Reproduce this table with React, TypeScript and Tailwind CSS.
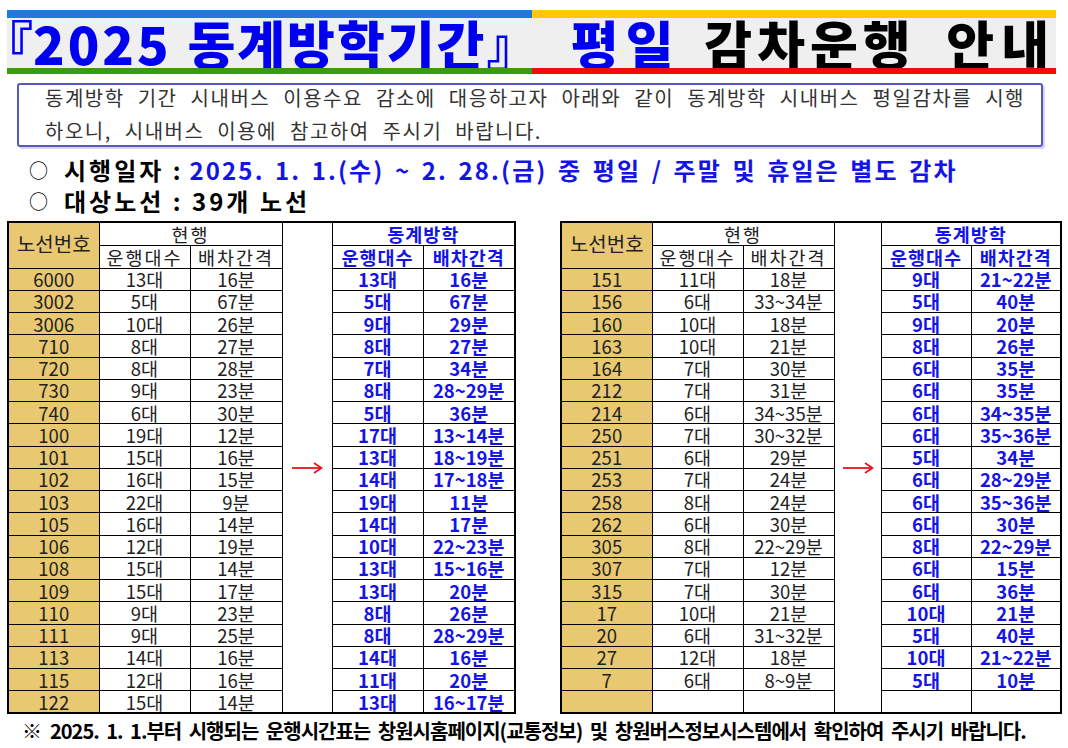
import React from "react";

const leftRows = [
  ["6000", "13대", "16분", "13대", "16분"],
  ["3002", "5대", "67분", "5대", "67분"],
  ["3006", "10대", "26분", "9대", "29분"],
  ["710", "8대", "27분", "8대", "27분"],
  ["720", "8대", "28분", "7대", "34분"],
  ["730", "9대", "23분", "8대", "28~29분"],
  ["740", "6대", "30분", "5대", "36분"],
  ["100", "19대", "12분", "17대", "13~14분"],
  ["101", "15대", "16분", "13대", "18~19분"],
  ["102", "16대", "15분", "14대", "17~18분"],
  ["103", "22대", "9분", "19대", "11분"],
  ["105", "16대", "14분", "14대", "17분"],
  ["106", "12대", "19분", "10대", "22~23분"],
  ["108", "15대", "14분", "13대", "15~16분"],
  ["109", "15대", "17분", "13대", "20분"],
  ["110", "9대", "23분", "8대", "26분"],
  ["111", "9대", "25분", "8대", "28~29분"],
  ["113", "14대", "16분", "14대", "16분"],
  ["115", "12대", "16분", "11대", "20분"],
  ["122", "15대", "14분", "13대", "16~17분"],
];

const rightRows = [
  ["151", "11대", "18분", "9대", "21~22분"],
  ["156", "6대", "33~34분", "5대", "40분"],
  ["160", "10대", "18분", "9대", "20분"],
  ["163", "10대", "21분", "8대", "26분"],
  ["164", "7대", "30분", "6대", "35분"],
  ["212", "7대", "31분", "6대", "35분"],
  ["214", "6대", "34~35분", "6대", "34~35분"],
  ["250", "7대", "30~32분", "6대", "35~36분"],
  ["251", "6대", "29분", "5대", "34분"],
  ["253", "7대", "24분", "6대", "28~29분"],
  ["258", "8대", "24분", "6대", "35~36분"],
  ["262", "6대", "30분", "6대", "30분"],
  ["305", "8대", "22~29분", "8대", "22~29분"],
  ["307", "7대", "12분", "6대", "15분"],
  ["315", "7대", "30분", "6대", "36분"],
  ["17", "10대", "21분", "10대", "21분"],
  ["20", "6대", "31~32분", "5대", "40분"],
  ["27", "12대", "18분", "10대", "21~22분"],
  ["7", "6대", "8~9분", "5대", "10분"],
  ["", "", "", "", ""],
];

function Arrow() {
  return (
    <svg width="32" height="14" viewBox="0 0 32 14" className="mx-auto">
      <line x1="1" y1="7" x2="30" y2="7" stroke="#e8141c" strokeWidth="1.8" />
      <path d="M23 2 L30.5 7 L23 12" fill="none" stroke="#e8141c" strokeWidth="1.8" />
    </svg>
  );
}

function RouteTable({ rows, cols }: { rows: string[][]; cols: string[] }) {
  const cell = "border border-black text-center p-0";
  const blue = "text-[#1414e6] font-bold";
  return (
    <table className="table-fixed border-collapse border-2 border-black leading-[20px] text-[18.5px] text-[#222]">
      <colgroup>
        {cols.map((c, i) => (
          <col key={i} className={c} />
        ))}
      </colgroup>
      <tbody>
        <tr className="h-[23px]">
          <td rowSpan={2} className={`${cell} bg-[#e8c870] text-[20px] pb-[3px]`}>
            노선번호
          </td>
          <td colSpan={2} className={`${cell} text-[18.5px] tracking-[2px]`}>
            현행
          </td>
          <td rowSpan={22} className={`${cell} align-middle`}>
            <Arrow />
          </td>
          <td colSpan={2} className={`${cell} ${blue} text-[18.5px] tracking-[1px]`}>
            동계방학
          </td>
        </tr>
        <tr className="h-[23px]">
          <td className={`${cell} text-[18.5px] tracking-[2px]`}>운행대수</td>
          <td className={`${cell} text-[18.5px] tracking-[2px]`}>배차간격</td>
          <td className={`${cell} ${blue} text-[18.5px] tracking-[1px]`}>운행대수</td>
          <td className={`${cell} ${blue} text-[18.5px] tracking-[1px]`}>배차간격</td>
        </tr>
        {rows.map((r, i) => (
          <tr key={i} className="h-[22.25px]">
            <td className={`${cell} bg-[#e8c870]`}>{r[0]}</td>
            <td className={cell}>{r[1]}</td>
            <td className={cell}>{r[2]}</td>
            <td className={`${cell} ${blue}`}>{r[3]}</td>
            <td className={`${cell} ${blue}`}>{r[4]}</td>
          </tr>
        ))}
      </tbody>
    </table>
  );
}

export default function App() {
  return (
    <div className="w-[1068px] h-[748px] bg-white overflow-hidden font-['Noto_Sans_CJK_KR',sans-serif]">
      {/* title band */}
      <div className="ml-[7px] mt-[10px] w-[1049px]">
        <div className="flex h-[8px]">
          <div className="w-[525px] bg-[#1c7ae2]" />
          <div className="flex-1 bg-[#ffc800]" />
        </div>
        <div className="flex items-center h-[50px] bg-[#efefef] text-[52px] font-black leading-[50px] whitespace-nowrap">
          <span className="w-[52px] -ml-[26px] text-[#0000f0]">『</span>
          <span className="w-[155px] text-[#0000f0] tracking-[3px]">2025</span>
          <span className="w-[385px] text-[#0000f0] tracking-[2px]">동계방학기간』</span>
          <span className="w-[134px] text-[#0000f0] tracking-[7px]">평일</span>
          <span className="w-[243px] text-black tracking-[5px]">감차운행</span>
          <span className="text-black tracking-[7px]">안내</span>
        </div>
        <div className="flex h-[6px]">
          <div className="w-[525px] bg-[#3a9a12]" />
          <div className="flex-1 bg-[#f20c0c]" />
        </div>
      </div>

      {/* notice */}
      <div className="ml-[17px] mt-[9px] w-[1026px] h-[64px] border-2 border-[#5656c4] rounded-[3px] shadow-[2px_2px_0_#d4d4f0] pl-[26px] pr-[16px] text-[20px] leading-[33px] text-[#333] tracking-[1.5px] [word-spacing:2px]">
        <div className="-mt-[4px] text-justify [text-align-last:justify]">
          동계방학 기간 시내버스 이용수요 감소에 대응하고자 아래와 같이 동계방학 시내버스 평일감차를 시행
        </div>
        <div className="[word-spacing:7px]">하오니, 시내버스 이용에 참고하여 주시기 바랍니다.</div>
      </div>

      {/* bullets */}
      <div className="ml-[29px] mt-[7px] text-[24px] font-bold leading-[31px] whitespace-nowrap">
        <div className="flex items-center">
          <span className="font-normal text-[19px] mr-[16px]">○</span>
          <span className="tracking-[3px]">시행일자 : </span>
          <span className="ml-[6px] text-[#1414e6] tracking-[2.1px] [word-spacing:3px]">
            2025. 1. 1.(수) ~ 2. 28.(금) 중 평일 / 주말 및 휴일은 별도 감차
          </span>
        </div>
        <div className="flex items-center">
          <span className="font-normal text-[19px] mr-[16px]">○</span>
          <span className="tracking-[3px]">대상노선 : 39개 노선</span>
        </div>
      </div>

      {/* tables */}
      <div className="flex gap-[44px] ml-[7px] mt-[5px]">
        <RouteTable
          rows={leftRows}
          cols={["w-[91px]", "w-[91px]", "w-[92px]", "w-[50px]", "w-[91px]", "w-[92px]"]}
        />
        <RouteTable
          rows={rightRows}
          cols={["w-[91px]", "w-[91px]", "w-[91px]", "w-[47px]", "w-[90px]", "w-[90px]"]}
        />
      </div>

      {/* footer */}
      <div className="ml-[22px] mt-[3px] text-[20px] font-bold leading-[28px] whitespace-nowrap tracking-[-1px]">
        <span className="font-normal mr-[9px]">※</span>
        <span className="[word-spacing:4px]">
          2025. 1. 1.부터 시행되는 운행시간표는 창원시홈페이지(교통정보) 및 창원버스정보시스템에서 확인하여 주시기 바랍니다.
        </span>
      </div>
    </div>
  );
}
